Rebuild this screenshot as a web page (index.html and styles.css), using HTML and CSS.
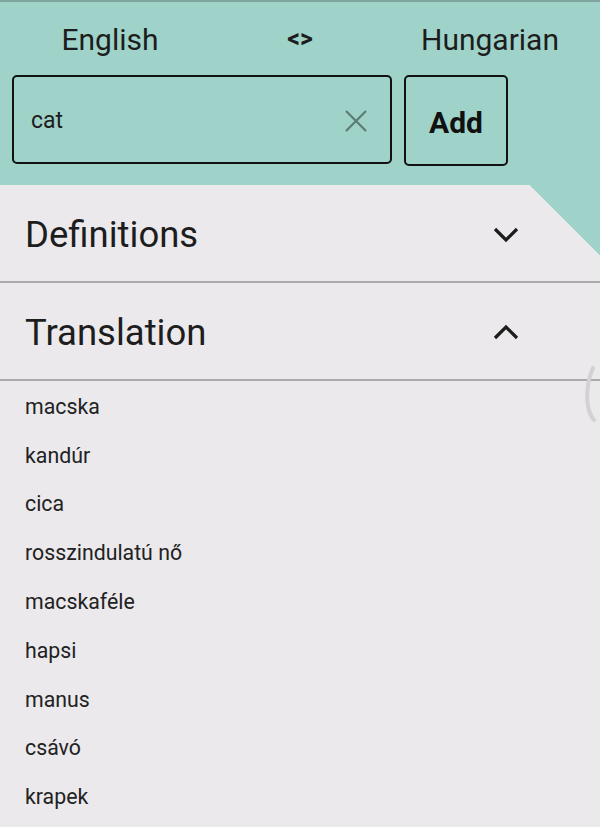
FILE: index.html
```html
<!DOCTYPE html>
<html lang="en">
<head>
<meta charset="utf-8">
<title>Dictionary</title>
<link rel="stylesheet" href="styles.css">
</head>
<body>
<div class="app">
  <header class="header">
    <div class="langs">
      <span class="lang">English</span>
      <span class="swap">&lt;&gt;</span>
      <span class="lang">Hungarian</span>
    </div>
    <div class="search-row">
      <div class="search">
        <span class="query">cat</span>
        <svg class="clear" width="22" height="22" viewBox="0 0 22 22"><path d="M1 1L21 21M21 1L1 21" stroke="#5b7c75" stroke-width="2.2" fill="none"/></svg>
      </div>
      <button class="add">Add</button>
    </div>
  </header>
  <main class="content">
    <div class="corner"></div>
    <section class="panel">
      <div class="panel-head">
        <span class="panel-title">Definitions</span>
        <svg class="chev" width="26" height="17" viewBox="0 0 26 17"><path d="M2 3L13 14L24 3" stroke="#1c1c1c" stroke-width="3.2" fill="none"/></svg>
      </div>
    </section>
    <section class="panel">
      <div class="panel-head">
        <span class="panel-title">Translation</span>
        <svg class="chev" width="26" height="17" viewBox="0 0 26 17"><path d="M2 14L13 3L24 14" stroke="#1c1c1c" stroke-width="3.2" fill="none"/></svg>
      </div>
    </section>
    <ul class="list">
      <li>macska</li>
      <li>kandúr</li>
      <li>cica</li>
      <li>rosszindulatú nő</li>
      <li>macskaféle</li>
      <li>hapsi</li>
      <li>manus</li>
      <li>csávó</li>
      <li>krapek</li>
    </ul>
    <svg class="scroll" width="14" height="58" viewBox="0 0 14 58"><path d="M9 3C4 14 2.5 26 3.5 38C4.5 46 6.5 51 10 55" stroke="#d2d1d3" stroke-width="4" stroke-linecap="round" fill="none"/></svg>
  </main>
</div>
</body>
</html>
```
FILE: styles.css
```css
* { box-sizing: border-box; }
html, body {
  margin: 0;
  padding: 0;
  background: #ebe9ec;
  font-family: Roboto, "Noto Sans", sans-serif;
  color: #1d1d1d;
}
.app {
  width: 600px;
  height: 827px;
  overflow: hidden;
}
.header {
  background: #9fd3c9;
  border-top: 2px solid #7fa59e;
  height: 185px;
  padding: 0 12px;
}
.langs {
  display: grid;
  grid-template-columns: 1fr 1fr 1fr;
  padding: 0 3px 0 3px;
  height: 73px;
  align-items: center;
}
.lang {
  text-align: center;
  font-size: 30px;
  line-height: 36px;
  margin-top: 2px;
}
.swap {
  text-align: center;
  font-size: 25px;
  font-weight: 700;
}
.search-row {
  display: flex;
  gap: 12px;
  align-items: flex-start;
}
.search {
  width: 380px;
  height: 89px;
  border: 2px solid #111;
  border-radius: 5px;
  display: flex;
  align-items: center;
  justify-content: space-between;
  padding: 2px 23px 0 17px;
}
.query {
  font-size: 23px;
}
.clear { display: block; }
.add {
  width: 104px;
  height: 91px;
  border: 2px solid #111;
  border-radius: 5px;
  background: transparent;
  font-family: Roboto, "Noto Sans", sans-serif;
  font-size: 30px;
  font-weight: 700;
  color: #111;
  padding: 3px 0 0 0;
  margin-top: 0;
}
.content {
  position: relative;
}
.corner {
  position: absolute;
  top: 0;
  right: 0;
  width: 70px;
  height: 70px;
  background: linear-gradient(to top right, transparent 50%, #9fd3c9 50%);
}
.panel {
  border-bottom: 2px solid #a9a8aa;
}
.panel-head {
  height: 96px;
  display: flex;
  align-items: center;
  justify-content: space-between;
  padding: 3px 81px 0 25px;
}
.panel-title {
  font-size: 36.5px;
}
.chev { display: block; }
.list {
  list-style: none;
  margin: 0;
  padding: 1px 0 0 0;
}
.list li {
  height: 48.8px;
  display: flex;
  align-items: center;
  padding-left: 25px;
  font-size: 21.3px;
  color: #222;
}
.scroll {
  position: absolute;
  right: 2px;
  top: 180px;
}
```
